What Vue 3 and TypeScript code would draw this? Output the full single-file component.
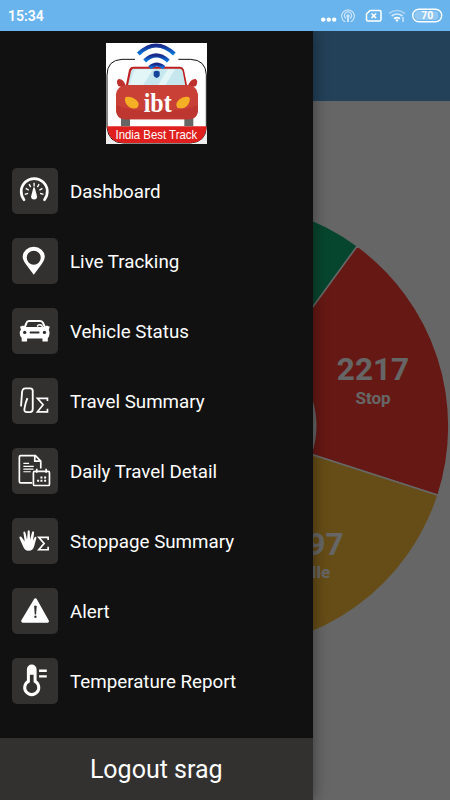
<script setup lang="ts">
type IconName = 'gauge' | 'pin' | 'car' | 'route' | 'calendar' | 'hand' | 'alert' | 'thermo'

interface MenuItem {
  icon: IconName
  label: string
}

const items: MenuItem[] = [
  { icon: 'gauge', label: 'Dashboard' },
  { icon: 'pin', label: 'Live Tracking' },
  { icon: 'car', label: 'Vehicle Status' },
  { icon: 'route', label: 'Travel Summary' },
  { icon: 'calendar', label: 'Daily Travel Detail' },
  { icon: 'hand', label: 'Stoppage Summary' },
  { icon: 'alert', label: 'Alert' },
  { icon: 'thermo', label: 'Temperature Report' },
]
</script>

<template>
  <div class="screen">
    <header class="status">
      <span class="time">15:34</span>
      <svg class="status-icons" viewBox="0 0 130 31" fill="none" stroke="#fff">
        <g fill="#fff" stroke="none">
          <circle cx="3.2" cy="19.6" r="2.2" /><circle cx="8.8" cy="19.6" r="2.2" /><circle cx="14.2" cy="19.6" r="2.2" />
        </g>
        <g opacity=".65" stroke-width="1.2">
          <path d="M25.3 21.8a6.3 6.3 0 1 1 5.4 0M26 18.4a3.6 3.6 0 1 1 4 0" />
          <circle cx="28" cy="16" r="1.2" fill="#fff" /><path d="M28 17v5" stroke-width="2" />
        </g>
        <path d="M50 10.5h9.500q1.500 0 1.500 1.500v7.500q0 1.500-1.500 1.500H48q-1.500 0-1.500-1.500V14zM51.500 13.500l4.600 4.600m0-4.600l-4.600 4.600" stroke-width="1.500" />
        <g stroke-width="1.700">
          <path d="M69 13.500q8-6 16 0" opacity=".4" />
          <path d="M71.500 16q5.500-4 11 0" opacity=".7" />
          <path d="M74 18.700q3-2.300 6 0" />
          <path d="M75.300 20q1.700-1.300 3.400 0l-1.700 2z" fill="#fff" stroke="none" />
          <path d="M83 17v5" stroke-width="1" />
        </g>
        <rect x="92.700" y="9.300" width="29" height="12.400" rx="6.200" stroke-width="1.400" />
        <path d="M99 11h15q4.500 0 4.500 4.500T114 20H99q-4.500 0-4.500-4.500T99 11z" fill="#fff" stroke="none" opacity=".25" />
        <text x="107.300" y="19.400" class="battery">70</text>
      </svg>
    </header>

    <div class="stage">
      <main class="page">
        <div class="toolbar"></div>
        <svg class="chart" viewBox="0 70 450 699">
          <g stroke="#fff" stroke-width="1.500">
            <path class="run" d="M225.200 171.300A223.500 223.500 0 0 1 357.300 215L279.100 322.300A90 90 0 0 0 225.200 305z" />
            <path class="stop" d="M357.300 215A223.500 223.500 0 0 1 438 464.300L311 423.200A90 90 0 0 0 279.100 322.300z" />
            <path class="idle" d="M438 464.300A223.500 223.500 0 0 1 225.200 618.300V485A90 90 0 0 0 311 423.200z" />
          </g>
          <text class="num" x="373" y="349">2217</text>
          <text class="cap" x="373" y="372.700">Stop</text>
          <text class="num" x="325.500" y="523.500">97</text>
          <text class="cap" x="316" y="547">Idle</text>
        </svg>
        <div class="shade"></div>
      </main>

      <aside class="drawer">
        <svg class="logo" viewBox="18 15 303 303">
          <defs>
            <linearGradient id="wave" x1="0" y1="0" x2="0" y2="1">
              <stop offset="0" stop-color="#19298c" /><stop offset="1" stop-color="#0878dc" />
            </linearGradient>
          </defs>
          <path d="M18 15h303v303H18z" fill="#fff" />
          <path d="M18 110V318H62Q22 308 20 266zM321 110V318H278Q318 308 320 266z" fill="#eee" />
          <path d="M105 64H66Q21 66 21 112V268Q26 315 70 315H272Q317 312 319 268V110Q317 66 272 64H235" fill="#fff" stroke="#111" stroke-width="3" />
          <path d="M21 265H320Q316 314 272 315H70Q26 314 21 265z" fill="#e0201e" />
          <path d="M63 232h27v33H63zM253 232h27v33h-27z" fill="#666" />
          <path d="M78 147Q72 122 56 123Q46 129 55 144L76 151zM263 147Q270 122 287 123Q296 129 288 144L266 151z" fill="#be302d" />
          <path d="M87 96Q90 86 101 86H238Q249 86 252 96L263 151H76z" fill="#bf1e1e" />
          <path d="M98 92H241Q246 92 248 100L256 142H84L93 99z" fill="#c7e7ef" />
          <path d="M104 94h55l-30 48H88zM203 94h22l-29 48h-22z" fill="#e2f6f8" />
          <path d="M79 141H263Q291 143 294 169V220Q291 242 269 244H73Q51 242 48 219V169Q51 144 79 141z" fill="#c94037" />
          <path d="M50 202Q95 221 149 216H193Q245 221 293 202V222Q290 242 269 244H73Q51 242 49 220z" fill="#bd362f" />
          <path d="M77 177Q93 173 108 185Q122 196 111 210Q92 215 81 201Q71 187 77 177zM267 177Q250 173 237 185Q223 198 233 210Q254 214 264 200Q273 186 267 177z" fill="#f5af24" />
          <g fill="none" stroke="url(#wave)" stroke-width="12">
            <path d="M115 48Q168 -3 223 48" /><path d="M134 69Q168 35 205 69" /><path d="M149 89Q170 70 192 89" />
          </g>
          <path d="M161 101Q170 96 179 101V112Q177 120 170 120T161 112z" fill="#15459a" />
          <text x="173" y="222" class="logo-mark" textLength="84" lengthAdjust="spacingAndGlyphs">ibt</text>
          <text x="169" y="302" class="logo-name" textLength="245" lengthAdjust="spacingAndGlyphs">India Best Track</text>
        </svg>

        <nav class="menu">
          <a v-for="item in items" :key="item.label" class="item">
            <span class="tile">
              <svg viewBox="37 26 136 136" fill="none" stroke="#fff" stroke-width="6">
                <g v-if="item.icon === 'gauge'">
                  <path d="M73 121A39 39 0 1 1 134 121" stroke-width="8" stroke-linecap="round" />
                  <path d="M103 70v11M88 74l5 9M118 74l-5 9M78 87l9 5M128 87l-9 5M75 105l10-3M131 105l-10-3" stroke-width="4" />
                  <path d="M101 84h4l7 27q0 9-9 9t-9-9z" fill="#fff" stroke="none" />
                </g>
                <path v-else-if="item.icon === 'pin'" fill="#fff" stroke="none" fill-rule="evenodd" d="M102 136L78 104Q69 91 69 83A33 31 0 0 1 135 83Q135 92 126 104zM102 64a21 21 0 1 0 0 42a21 21 0 0 0 0-42z" />
                <g v-else-if="item.icon === 'car'">
                  <path d="M74 87L80 71Q82 65 88 65H121Q127 65 130 71L137 87" />
                  <path d="M64 91L61 82L70 78L75 83H135L141 78L150 82L147 91Q150 97 149 104Q148 113 144 116V126H128V117H82V126H66V116Q60 112 60 101Q60 94 64 91z" fill="#fff" stroke="none" />
                  <path d="M113 82q0-6 7-6t8 7" stroke-width="4" />
                  <path d="M91 96h27q3 3 0 6H91q-3-3 0-6z" fill="#333130" stroke="none" />
                  <circle cx="75" cy="99" r="5" fill="#333130" stroke="none" /><circle cx="134" cy="99" r="5" fill="#333130" stroke="none" />
                </g>
                <g v-else-if="item.icon === 'route'">
                  <path d="M64 111L67 69Q68 57 77 57H92Q99 57 99 65V119Q99 128 91 128H82Q73 128 74 119Q76 103 83 86" stroke-width="5.500" />
                  <path d="M143 95V87H113L130 106L113 127H143V118" stroke-width="5" />
                </g>
                <g v-else-if="item.icon === 'calendar'">
                  <path d="M97 130H63Q59 130 59 126V53Q59 49 63 49H107L123 65V87M105 49V65H123" stroke-width="5" />
                  <path d="M71 72h17M71 81h31M71 89h30M71 97h22" stroke-width="3.500" />
                  <rect x="101" y="96" width="48" height="42" rx="4" stroke-width="5" />
                  <path d="M111 88v12M139 88v12" stroke-width="5" />
                  <path d="M122 114h6M133 114h6M112 124h6M122 124h6M133 124h6" stroke-width="6" />
                </g>
                <g v-else-if="item.icon === 'hand'">
                  <path d="M59 83Q63 79 67 85L75 96L71 69Q73 63 77 69L82 91L84 65Q87 60 90 65L91 91L97 68Q101 63 103 70L100 94L105 83Q110 80 110 86L103 111Q99 124 87 124Q76 125 71 113L60 88z" fill="#fff" stroke="none" />
                  <path d="M145 92V84H117L133 102L117 121H145V112" stroke-width="5" />
                </g>
                <g v-else-if="item.icon === 'alert'">
                  <path d="M107 61L143 125H69z" fill="#fff" stroke-linejoin="round" stroke-width="9" />
                  <path d="M103 80q4-3 8 0l-2 25h-4z" fill="#333130" stroke="none" /><circle cx="107" cy="112" r="3.500" fill="#333130" stroke="none" />
                </g>
                <g v-else>
                  <path d="M86 96V60A10 10 0 0 1 106 60V96A21 21 0 1 1 86 96z" stroke-width="9" />
                  <path d="M84 58Q86 48 96 48T108 58V76H84z" fill="#fff" stroke="none" />
                  <path d="M118 64h23M118 81h23" stroke-width="7" />
                </g>
              </svg>
            </span>
            <span class="label">{{ item.label }}</span>
          </a>
        </nav>

        <footer class="logout">Logout srag</footer>
      </aside>
    </div>
  </div>
</template>

<style>
body {
  margin: 0;
}
</style>

<style scoped>
.screen {
  width: 450px;
  height: 800px;
  display: flex;
  flex-direction: column;
  overflow: hidden;
  font-family: Roboto, sans-serif;
  color: #fff;
}
.status {
  height: 31px;
  flex: none;
  box-sizing: border-box;
  padding: 0 0 0 8px;
  display: flex;
  align-items: center;
  justify-content: space-between;
  background: #6ab4ee;
}
.time {
  font-size: 14px;
  font-weight: 600;
  padding-top: 1px;
}
.status-icons {
  width: 130px;
  height: 31px;
}
.battery {
  font: 700 10.5px Roboto, sans-serif;
  fill: #fff;
  stroke: none;
  text-anchor: middle;
}
.stage {
  position: relative;
  flex: 1;
  overflow: hidden;
}
.page {
  height: 769px;
  background: #fff;
  position: relative;
}
.toolbar {
  height: 70px;
  background: #58a3df;
}
.chart {
  display: block;
  width: 450px;
  height: 699px;
}
.run { fill: #12b074; }
.stop { fill: #ff3e32; }
.idle { fill: #ffc03a; }
.num,
.cap {
  fill: #fff;
  text-anchor: middle;
  font-weight: 700;
}
.num { font-size: 31.5px; }
.cap { font-size: 17px; }
.shade {
  position: absolute;
  inset: 0;
  background: rgba(0, 0, 0, 0.6);
}
.drawer {
  position: absolute;
  top: 0;
  left: 0;
  width: 312.500px;
  height: 769px;
  display: flex;
  flex-direction: column;
  background: #111;
  box-shadow: 0 0 14px rgba(0, 0, 0, 0.45);
}
.logo {
  width: 101px;
  height: 101px;
  margin: 12px auto 0;
}
.logo-mark {
  font: 700 80px "Liberation Serif", serif;
  fill: #fff;
  text-anchor: middle;
}
.logo-name {
  font: 37px "Liberation Sans", sans-serif;
  fill: #fff;
  text-anchor: middle;
}
.menu {
  display: flex;
  flex-direction: column;
  margin-top: 12px;
  flex: 1;
}
.item {
  height: 70px;
  display: flex;
  align-items: center;
  gap: 12.500px;
  padding-left: 12px;
}
.tile {
  width: 45.500px;
  height: 45.500px;
  border-radius: 5px;
  background: #333130;
}
.tile svg {
  display: block;
  width: 100%;
  height: 100%;
}
.label {
  font-size: 18.750px;
  padding-top: 1px;
  white-space: nowrap;
}
.logout {
  height: 62px;
  display: flex;
  align-items: center;
  justify-content: center;
  background: #333130;
  font-size: 25px;
}
</style>
